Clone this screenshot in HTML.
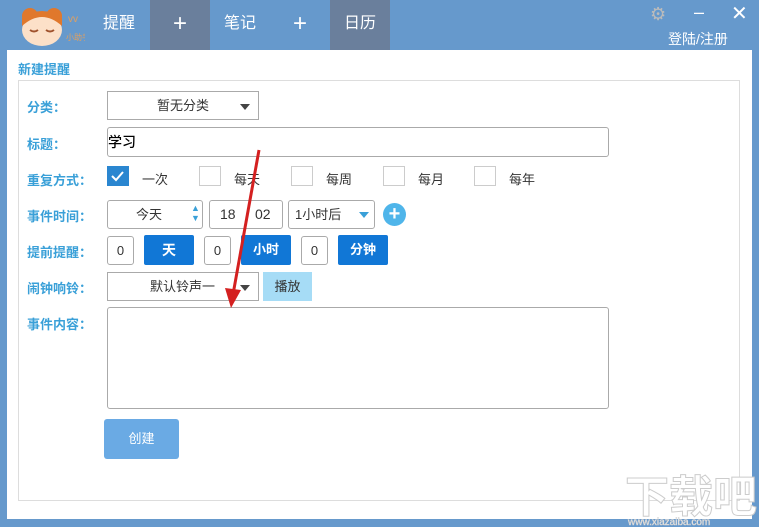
<!DOCTYPE html>
<html><head><meta charset="utf-8"><style>
*{box-sizing:border-box;margin:0;padding:0}
body{width:759px;height:527px;background:#6699cc;font-family:"Liberation Sans","Noto Sans CJK SC",sans-serif;position:relative;overflow:hidden;font-size:13px;color:#333}
.abs{position:absolute}
.tab{position:absolute;top:0;height:50px;line-height:48px;color:#fff;font-size:16px;text-align:center}
.panel{position:absolute;left:7px;top:50px;width:745px;height:469px;background:#fff}
.inner{position:absolute;left:18px;top:80px;width:722px;height:421px;border:1px solid #ddd;background:#fff}
.lbl{position:absolute;left:27px;color:#3aa0d8;font-size:13px;font-weight:bold}
.box{position:absolute;border:1px solid #aaa;background:#fff;border-radius:3px}
.cb{position:absolute;width:22px;height:20px;border:1px solid #ccc;background:#fff}
.btn{position:absolute;background:#1177d6;color:#fff;font-weight:bold;text-align:center;border-radius:2px}
.tri{display:inline-block;border-left:5px solid transparent;border-right:5px solid transparent;border-top:6px solid #444;position:absolute}
</style></head><body>
<svg class="abs" style="left:10px;top:8px" width="75" height="40">
<circle cx="20" cy="8" r="8" fill="#e0782c"/><circle cx="44" cy="8" r="8" fill="#e0782c"/>
<ellipse cx="32" cy="22" rx="20" ry="16" fill="#fce0c8"/>
<path d="M12 18 Q32 0 52 18 L52 10 Q32 -4 12 10Z" fill="#e0782c"/>
<path d="M20 22 q4 3 8 0 M36 22 q4 3 8 0" stroke="#a0522d" stroke-width="2" fill="none"/>
<text x="58" y="14" fill="#e0a060" font-size="10">vv</text>
<text x="56" y="32" fill="#e0a060" font-size="8">小助手</text>
</svg>
<div class="tab" style="left:88px;width:62px">提醒</div>
<div class="tab" style="left:150px;width:60px;background:#6a7f9c;font-size:24px">+</div>
<div class="tab" style="left:210px;width:60px">笔记</div>
<div class="tab" style="left:270px;width:60px;font-size:24px">+</div>
<div class="tab" style="left:330px;width:60px;background:#6a7f9c">日历</div>
<div class="abs" style="left:650px;top:4px;color:#bbb;font-size:18px">⚙</div>
<div class="abs" style="left:694px;top:2px;color:#fff;font-size:18px">–</div>
<div class="abs" style="left:731px;top:1px;color:#fff;font-size:20px">✕</div>
<div class="abs" style="left:668px;top:29px;color:#fff;font-size:14px">登陆/注册</div>
<div class="panel"></div>
<div class="abs" style="left:18px;top:59px;color:#3aa0d8;font-size:13px;font-weight:bold">新建提醒</div>
<div class="inner"></div>
<div class="lbl" style="top:97px">分类：</div>
<div class="box" style="left:107px;top:91px;width:152px;height:29px;border-radius:0;text-align:center;line-height:27px">暂无分类<span class="tri" style="left:132px;top:12px"></span></div>
<div class="lbl" style="top:134px">标题：</div>
<div class="box" style="left:107px;top:127px;width:502px;height:30px;line-height:28px;color:#000;font-size:14px;font-weight:500">学习</div>
<div class="lbl" style="top:170px">重复方式：</div>
<div class="cb" style="left:107px;top:166px;background:#2a86d0;border-color:#2a86d0"><svg width="20" height="18"><path d="M4 9 L8 13 L15 5" stroke="#fff" stroke-width="2" fill="none"/></svg></div>
<div class="abs" style="left:142px;top:169px">一次</div>
<div class="cb" style="left:199px;top:166px"></div><div class="abs" style="left:234px;top:169px">每天</div>
<div class="cb" style="left:291px;top:166px"></div><div class="abs" style="left:326px;top:169px">每周</div>
<div class="cb" style="left:383px;top:166px"></div><div class="abs" style="left:418px;top:169px">每月</div>
<div class="cb" style="left:474px;top:166px"></div><div class="abs" style="left:509px;top:169px">每年</div>
<div class="lbl" style="top:206px">事件时间：</div>
<div class="box" style="left:107px;top:200px;width:96px;height:29px;line-height:27px;padding-left:28px">今天<span class="abs" style="left:83px;top:2px;color:#3aa0d8;font-size:9px;line-height:10px">▲<br>▼</span></div>
<div class="box" style="left:209px;top:200px;width:74px;height:29px;line-height:27px;padding-left:10px;font-size:14px">18 &nbsp; &nbsp; 02</div>
<div class="box" style="left:288px;top:200px;width:87px;height:29px;line-height:27px;padding-left:6px">1小时后<span class="tri" style="left:70px;top:11px;border-top-color:#3aa0d8"></span></div>
<div class="abs" style="left:383px;top:203px;width:23px;height:23px;border-radius:50%;background:#4fb5ea;color:#fff;text-align:center;line-height:22px;font-size:20px;font-weight:bold">+</div>
<div class="lbl" style="top:242px">提前提醒：</div>
<div class="box" style="left:107px;top:236px;width:27px;height:29px;text-align:center;line-height:27px">0</div>
<div class="btn" style="left:144px;top:235px;width:50px;height:30px;line-height:30px;font-size:14px">天</div>
<div class="box" style="left:204px;top:236px;width:27px;height:29px;text-align:center;line-height:27px">0</div>
<div class="btn" style="left:241px;top:235px;width:50px;height:30px;line-height:30px">小时</div>
<div class="box" style="left:301px;top:236px;width:27px;height:29px;text-align:center;line-height:27px">0</div>
<div class="btn" style="left:338px;top:235px;width:50px;height:30px;line-height:30px">分钟</div>
<div class="lbl" style="top:278px">闹钟响铃：</div>
<div class="box" style="left:107px;top:272px;width:152px;height:29px;border-radius:0;line-height:27px;padding-left:42px">默认铃声一<span class="tri" style="left:132px;top:12px"></span></div>
<div class="abs" style="left:263px;top:272px;width:49px;height:29px;background:#a6dcf6;text-align:center;line-height:29px">播放</div>
<div class="lbl" style="top:314px">事件内容：</div>
<div class="box" style="left:107px;top:307px;width:502px;height:102px"></div>
<div class="abs" style="left:104px;top:419px;width:75px;height:40px;background:#6aaae4;color:#fff;text-align:center;line-height:40px;border-radius:3px">创建</div>
<svg class="abs" style="left:0;top:0" width="759" height="527"><line x1="259" y1="150" x2="232" y2="300" stroke="#d42020" stroke-width="3"/><path d="M225 288 L231 308 L241 290Z" fill="#d42020"/>
<text x="625" y="512" font-size="44" font-weight="bold" fill="#fff" stroke="#ccc" stroke-width="1" font-family="Noto Sans CJK SC, sans-serif">下载吧</text>
<text x="628" y="525" font-size="10" fill="#fff" stroke="#ccc" stroke-width="0.5">www.xiazaiba.com</text></svg>
</body></html>
